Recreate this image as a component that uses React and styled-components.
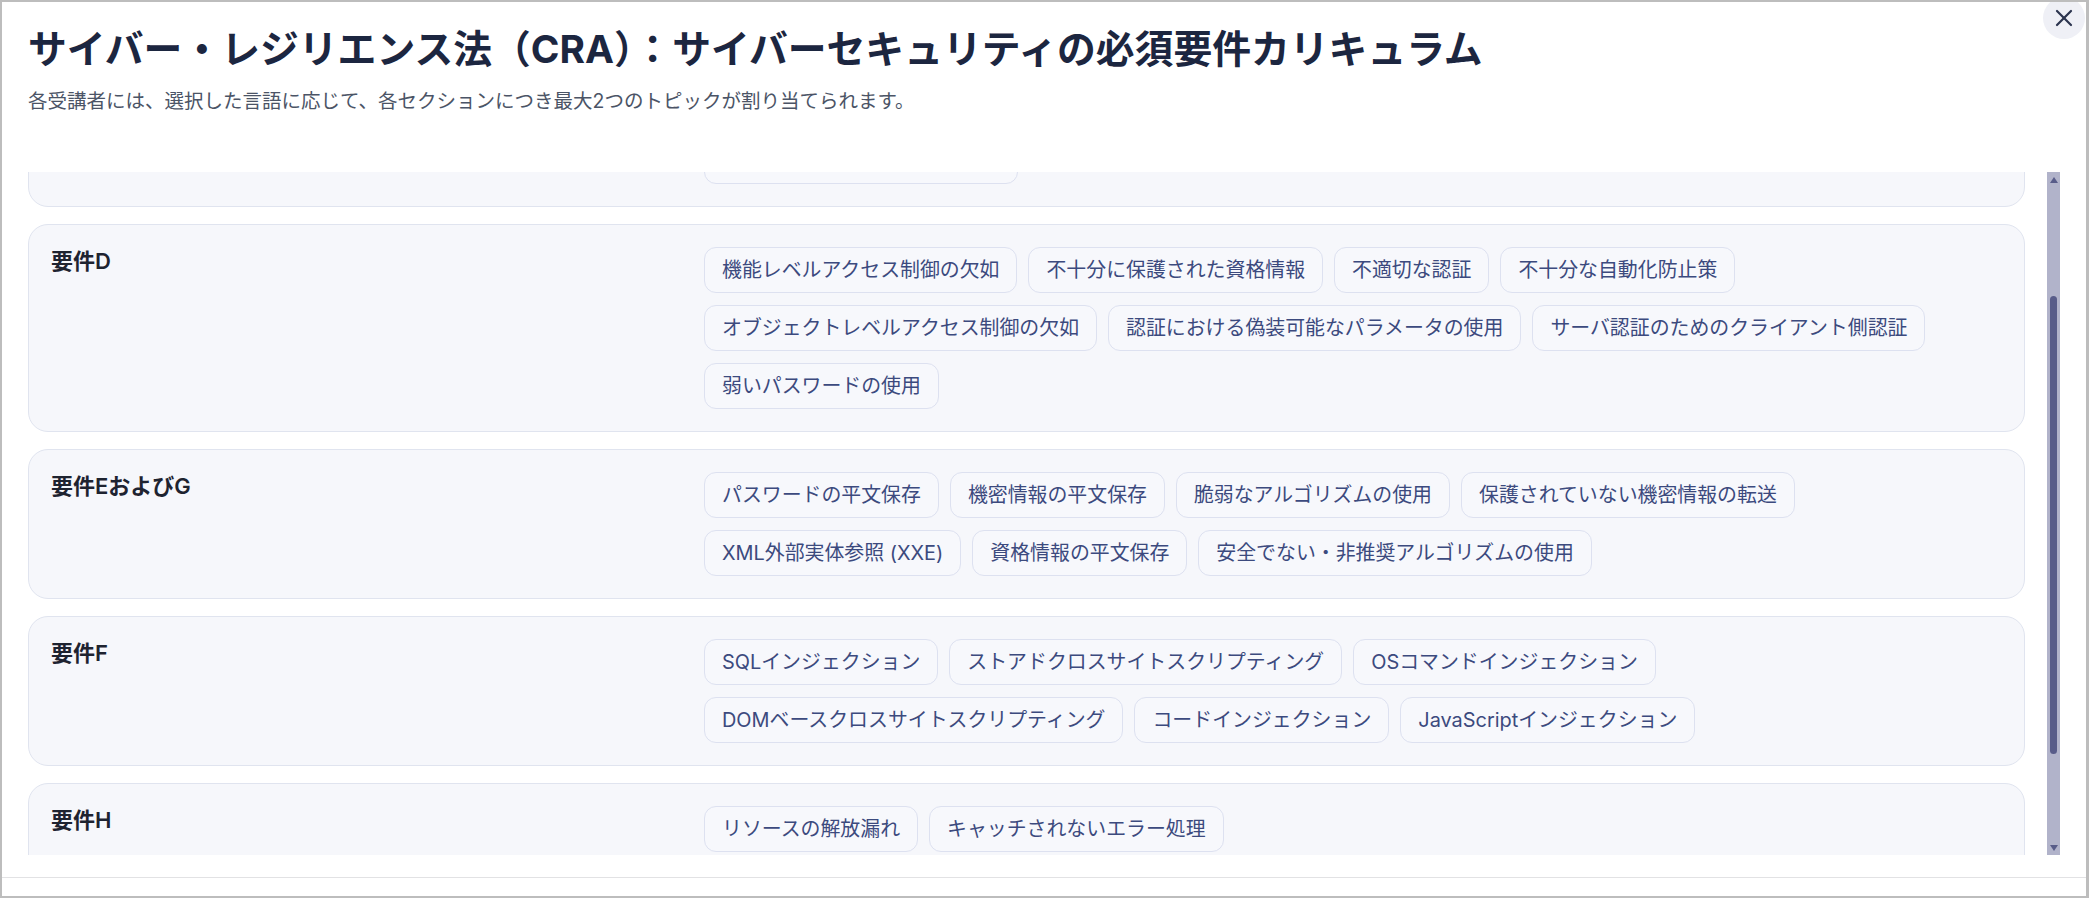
import React, { useLayoutEffect, useRef, useState } from "react";
import styled, { createGlobalStyle } from "styled-components";
import { X } from "lucide-react";

const GlobalStyle = createGlobalStyle`
  html, body {
    margin: 0;
    padding: 0;
    background: #ffffff;
    overflow: hidden;
  }
  body {
    font-family: Inter, "Noto Sans CJK JP", "Noto Sans", sans-serif;
  }
`;

const Frame = styled.div`
  position: relative;
  box-sizing: border-box;
  width: 2089px;
  height: 898px;
  border: 2px solid #bdbdbd;
  border-right-width: 3px;
  background: #ffffff;
  display: flex;
  flex-direction: column;
  overflow: hidden;
`;

const CloseButton = styled.button`
  position: absolute;
  top: -5px;
  right: 1px;
  width: 42px;
  height: 42px;
  border: none;
  border-radius: 50%;
  background: #eff0f6;
  color: #2d3550;
  display: flex;
  align-items: center;
  justify-content: center;
  padding: 0;
  cursor: pointer;
`;

const Header = styled.header`
  box-sizing: border-box;
  height: 170px;
  flex-shrink: 0;
  padding: 21px 26px 0;
`;

const Title = styled.h2`
  margin: 0;
  font-size: 38.8px;
  line-height: 52px;
  font-weight: 700;
  color: #1c2640;
  white-space: nowrap;
`;

const Subtitle = styled.p`
  margin: 12px 0 0;
  font-size: 19.5px;
  line-height: 28px;
  color: #4b5466;
`;

const Body = styled.div`
  height: 683px;
  flex-shrink: 0;
  margin: 0 26px;
  display: flex;
`;

const ScrollArea = styled.div`
  flex: 1;
  min-width: 0;
  padding-right: 22px;
  overflow-y: scroll;
  scrollbar-width: none;
  &::-webkit-scrollbar {
    display: none;
  }
`;

const Track = styled.div`
  position: relative;
  width: 13px;
  flex-shrink: 0;
  background: #b1b3ca;
  display: flex;
  flex-direction: column;
  justify-content: space-between;
  align-items: center;
`;

const Arrow = styled.div`
  width: 15px;
  height: 15px;
  display: flex;
  align-items: center;
  justify-content: center;
  color: #585c89;
`;

const Thumb = styled.div`
  position: absolute;
  left: 3px;
  right: 3px;
  border-radius: 4px;
  background: #585c89;
`;

const CardList = styled.div`
  display: flex;
  flex-direction: column;
  gap: 17px;
`;

const Card = styled.section`
  display: grid;
  grid-template-columns: repeat(3, minmax(0, 1fr));
  column-gap: 8px;
  padding: 22px;
  border: 1px solid #e0e4ef;
  border-radius: 20px;
  background: #f6f7fb;
`;

const Label = styled.h3`
  margin: 0;
  font-size: 22px;
  line-height: 28px;
  font-weight: 600;
  color: #1e2330;
`;

const Topics = styled.div`
  grid-column: span 2;
  display: flex;
  flex-wrap: wrap;
  gap: 12px 11px;
  align-content: flex-start;
`;

const Topic = styled.span`
  display: inline-flex;
  align-items: center;
  padding: 8px 17px;
  font-size: 19.9px;
  line-height: 28px;
  color: #3c4a7e;
  background: #f7f8fc;
  border: 1px solid #dde1f0;
  border-radius: 12px;
  white-space: nowrap;
`;

const Footer = styled.footer`
  flex: 1;
  margin-top: 22px;
  border-top: 1px solid #e2e2e4;
`;

const sections = [
  {
    label: "要件A〜C",
    topics: [
      "既知の脆弱性を持つコンポーネントの使用",
      "安全でないデフォルト設定",
      "セキュリティ更新の欠如",
      "不要な機能の有効化",
      "デバッグ機能の本番環境での有効化",
      "安全でないデシリアライゼーション",
      "セキュリティ設定の誤り",
      "ハードコードされた資格情報",
      "既知の脆弱性を含むライブラリ",
    ],
  },
  {
    label: "要件D",
    topics: [
      "機能レベルアクセス制御の欠如",
      "不十分に保護された資格情報",
      "不適切な認証",
      "不十分な自動化防止策",
      "オブジェクトレベルアクセス制御の欠如",
      "認証における偽装可能なパラメータの使用",
      "サーバ認証のためのクライアント側認証",
      "弱いパスワードの使用",
    ],
  },
  {
    label: "要件EおよびG",
    topics: [
      "パスワードの平文保存",
      "機密情報の平文保存",
      "脆弱なアルゴリズムの使用",
      "保護されていない機密情報の転送",
      "XML外部実体参照 (XXE)",
      "資格情報の平文保存",
      "安全でない・非推奨アルゴリズムの使用",
    ],
  },
  {
    label: "要件F",
    topics: [
      "SQLインジェクション",
      "ストアドクロスサイトスクリプティング",
      "OSコマンドインジェクション",
      "DOMベースクロスサイトスクリプティング",
      "コードインジェクション",
      "JavaScriptインジェクション",
    ],
  },
  {
    label: "要件H",
    topics: ["リソースの解放漏れ", "キャッチされないエラー処理"],
  },
  {
    label: "要件IからM",
    topics: ["ログ記録の不備", "攻撃対象領域の過剰な公開"],
  },
];

const ARROW = 15;

export default function App() {
  const scrollRef = useRef(null);
  const [thumb, setThumb] = useState({ top: ARROW, height: 0 });

  useLayoutEffect(() => {
    const el = scrollRef.current;
    if (!el) return;
    el.scrollTop = 173;
    const travel = el.clientHeight - ARROW * 2;
    setThumb({
      top: ARROW + (el.scrollTop / el.scrollHeight) * travel - 6,
      height: (el.clientHeight / el.scrollHeight) * travel + 6,
    });
  }, []);

  return (
    <>
      <GlobalStyle />
      <Frame>
        <CloseButton aria-label="閉じる">
          <X size={28} strokeWidth={1.9} />
        </CloseButton>
        <Header>
          <Title>サイバー・レジリエンス法（CRA）：サイバーセキュリティの必須要件カリキュラム</Title>
          <Subtitle>
            各受講者には、選択した言語に応じて、各セクションにつき最大2つのトピックが割り当てられます。
          </Subtitle>
        </Header>
        <Body>
          <ScrollArea ref={scrollRef}>
            <CardList>
              {sections.map((s) => (
                <Card key={s.label}>
                  <Label>{s.label}</Label>
                  <Topics>
                    {s.topics.map((t) => (
                      <Topic key={t}>{t}</Topic>
                    ))}
                  </Topics>
                </Card>
              ))}
            </CardList>
          </ScrollArea>
          <Track>
            <Arrow>
              <svg width="8" height="6" viewBox="0 0 8 6">
                <path d="M4 0 L8 6 L0 6 Z" fill="currentColor" />
              </svg>
            </Arrow>
            <Thumb style={{ top: thumb.top, height: thumb.height }} />
            <Arrow>
              <svg width="8" height="6" viewBox="0 0 8 6">
                <path d="M0 0 L8 0 L4 6 Z" fill="currentColor" />
              </svg>
            </Arrow>
          </Track>
        </Body>
        <Footer />
      </Frame>
    </>
  );
}
